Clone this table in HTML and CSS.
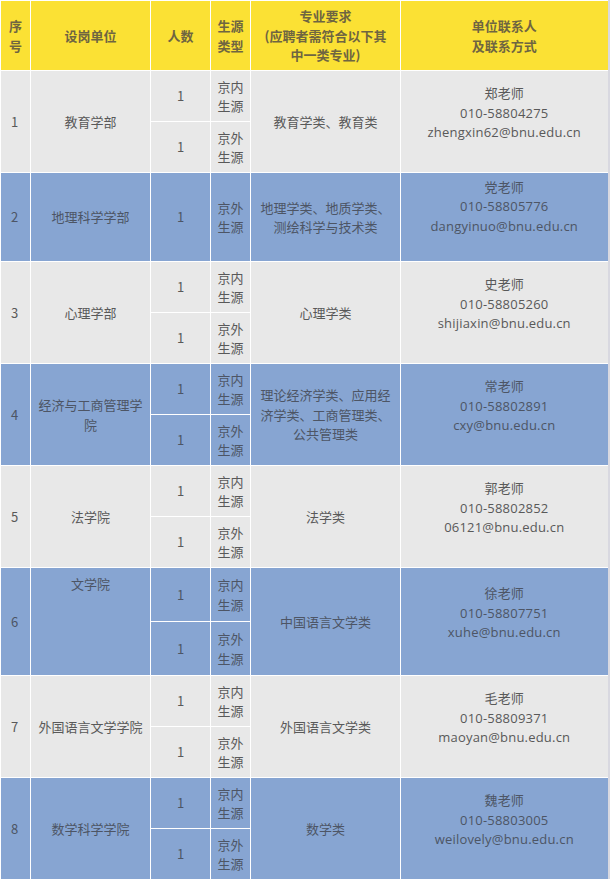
FILE: index.html
```html
<!DOCTYPE html>
<html lang="zh">
<head>
<meta charset="utf-8">
<link rel="stylesheet" href="styles.css">
</head>
<body>
<table class="jobs">
  <colgroup>
    <col class="c-no"><col class="c-unit"><col class="c-num"><col class="c-src"><col class="c-major"><col class="c-contact">
  </colgroup>
  <thead>
    <tr class="head">
      <th>序号</th>
      <th>设岗单位</th>
      <th>人数</th>
      <th>生源<br>类型</th>
      <th>专业要求<br>(应聘者需符合以下其<br>中一类专业)</th>
      <th>单位联系人<br>及联系方式</th>
    </tr>
  </thead>
  <tbody>
    <tr class="grey h51">
      <td class="no" rowspan="2">1</td>
      <td rowspan="2">教育学部</td>
      <td>1</td><td class="src">京内<br>生源</td>
      <td rowspan="2">教育学类、教育类</td>
      <td class="contact" rowspan="2">郑老师<br>010-58804275<br>zhengxin62@bnu.edu.cn</td>
    </tr>
    <tr class="grey h51"><td>1</td><td class="src">京外<br>生源</td></tr>

    <tr class="blue h89">
      <td class="no">2</td>
      <td>地理科学学部</td>
      <td>1</td><td class="src">京外<br>生源</td>
      <td class="major">地理学类、地质学类、<br>测绘科学与技术类</td>
      <td class="contact top">党老师<br>010-58805776<br>dangyinuo@bnu.edu.cn</td>
    </tr>

    <tr class="grey h51">
      <td class="no" rowspan="2">3</td>
      <td rowspan="2">心理学部</td>
      <td>1</td><td class="src">京内<br>生源</td>
      <td rowspan="2">心理学类</td>
      <td class="contact" rowspan="2">史老师<br>010-58805260<br>shijiaxin@bnu.edu.cn</td>
    </tr>
    <tr class="grey h51"><td>1</td><td class="src">京外<br>生源</td></tr>

    <tr class="blue h51">
      <td class="no" rowspan="2">4</td>
      <td rowspan="2">经济与工商管理学<br>院</td>
      <td>1</td><td class="src">京内<br>生源</td>
      <td class="major" rowspan="2">理论经济学类、应用经<br>济学类、工商管理类、<br>公共管理类</td>
      <td class="contact" rowspan="2">常老师<br>010-58802891<br>cxy@bnu.edu.cn</td>
    </tr>
    <tr class="blue h51"><td>1</td><td class="src">京外<br>生源</td></tr>

    <tr class="grey h51">
      <td class="no" rowspan="2">5</td>
      <td rowspan="2">法学院</td>
      <td>1</td><td class="src">京内<br>生源</td>
      <td rowspan="2">法学类</td>
      <td class="contact" rowspan="2">郭老师<br>010-58802852<br>06121@bnu.edu.cn</td>
    </tr>
    <tr class="grey h51"><td>1</td><td class="src">京外<br>生源</td></tr>

    <tr class="blue h54">
      <td class="no" rowspan="2">6</td>
      <td class="top-unit" rowspan="2">文学院</td>
      <td>1</td><td class="src">京内<br>生源</td>
      <td rowspan="2">中国语言文学类</td>
      <td class="contact" rowspan="2">徐老师<br>010-58807751<br>xuhe@bnu.edu.cn</td>
    </tr>
    <tr class="blue h54"><td>1</td><td class="src">京外<br>生源</td></tr>

    <tr class="grey h51">
      <td class="no" rowspan="2">7</td>
      <td rowspan="2">外国语言文学学院</td>
      <td>1</td><td class="src">京内<br>生源</td>
      <td rowspan="2">外国语言文学类</td>
      <td class="contact" rowspan="2">毛老师<br>010-58809371<br>maoyan@bnu.edu.cn</td>
    </tr>
    <tr class="grey h51"><td>1</td><td class="src">京外<br>生源</td></tr>

    <tr class="blue h51">
      <td class="no" rowspan="2">8</td>
      <td rowspan="2">数学科学学院</td>
      <td>1</td><td class="src">京内<br>生源</td>
      <td rowspan="2">数学类</td>
      <td class="contact" rowspan="2">魏老师<br>010-58803005<br>weilovely@bnu.edu.cn</td>
    </tr>
    <tr class="blue h51"><td>1</td><td class="src">京外<br>生源</td></tr>
  </tbody>
</table>
</body>
</html>
```

FILE: styles.css
```css
html, body {
  margin: 0;
  padding: 0;
  background: #ffffff;
}

body {
  font-family: "Noto Sans CJK SC", "Noto Sans", sans-serif;
  font-size: 13px;
  color: #595959;
}

.jobs {
  width: 609px;
  table-layout: fixed;
  border-collapse: collapse;
  border-right: 2px solid #d8d8e0;
}

.c-no { width: 30px; }
.c-unit { width: 120px; }
.c-num { width: 60px; }
.c-src { width: 40px; }
.c-major { width: 150px; }
.c-contact { width: 208px; }

.jobs th,
.jobs td {
  border: 1.5px solid #ffffff;
  text-align: center;
  vertical-align: middle;
  padding: 0 3px;
  line-height: 19.5px;
  box-sizing: border-box;
}

.jobs .head th {
  height: 70px;
  background: #fbe134;
  color: #6f6541;
  font-weight: bold;
  font-size: 13px;
  line-height: 19.5px;
  padding: 0 2px;
}

.grey td { background: #e8e8e8; }
.blue td { background: #87a5d2; color: #4d5565; }

.h51 { height: 51px; }
.h54 { height: 54px; }
.h89 { height: 89px; }

.jobs td.no {
  text-align: left;
  padding-left: 10px;
}

.jobs td.src {
  padding: 0;
  text-align: center;
}

.jobs td.major {
  padding: 0 6px;
}

.jobs td.contact {
  letter-spacing: 0.2px;
  font-family: "Open Sans", "Noto Sans CJK SC", sans-serif;
  padding-bottom: 16px;
}

.jobs td.contact.top {
  padding-bottom: 20px;
}

.jobs td.top-unit {
  vertical-align: top;
  padding-top: 6px;
}
```
